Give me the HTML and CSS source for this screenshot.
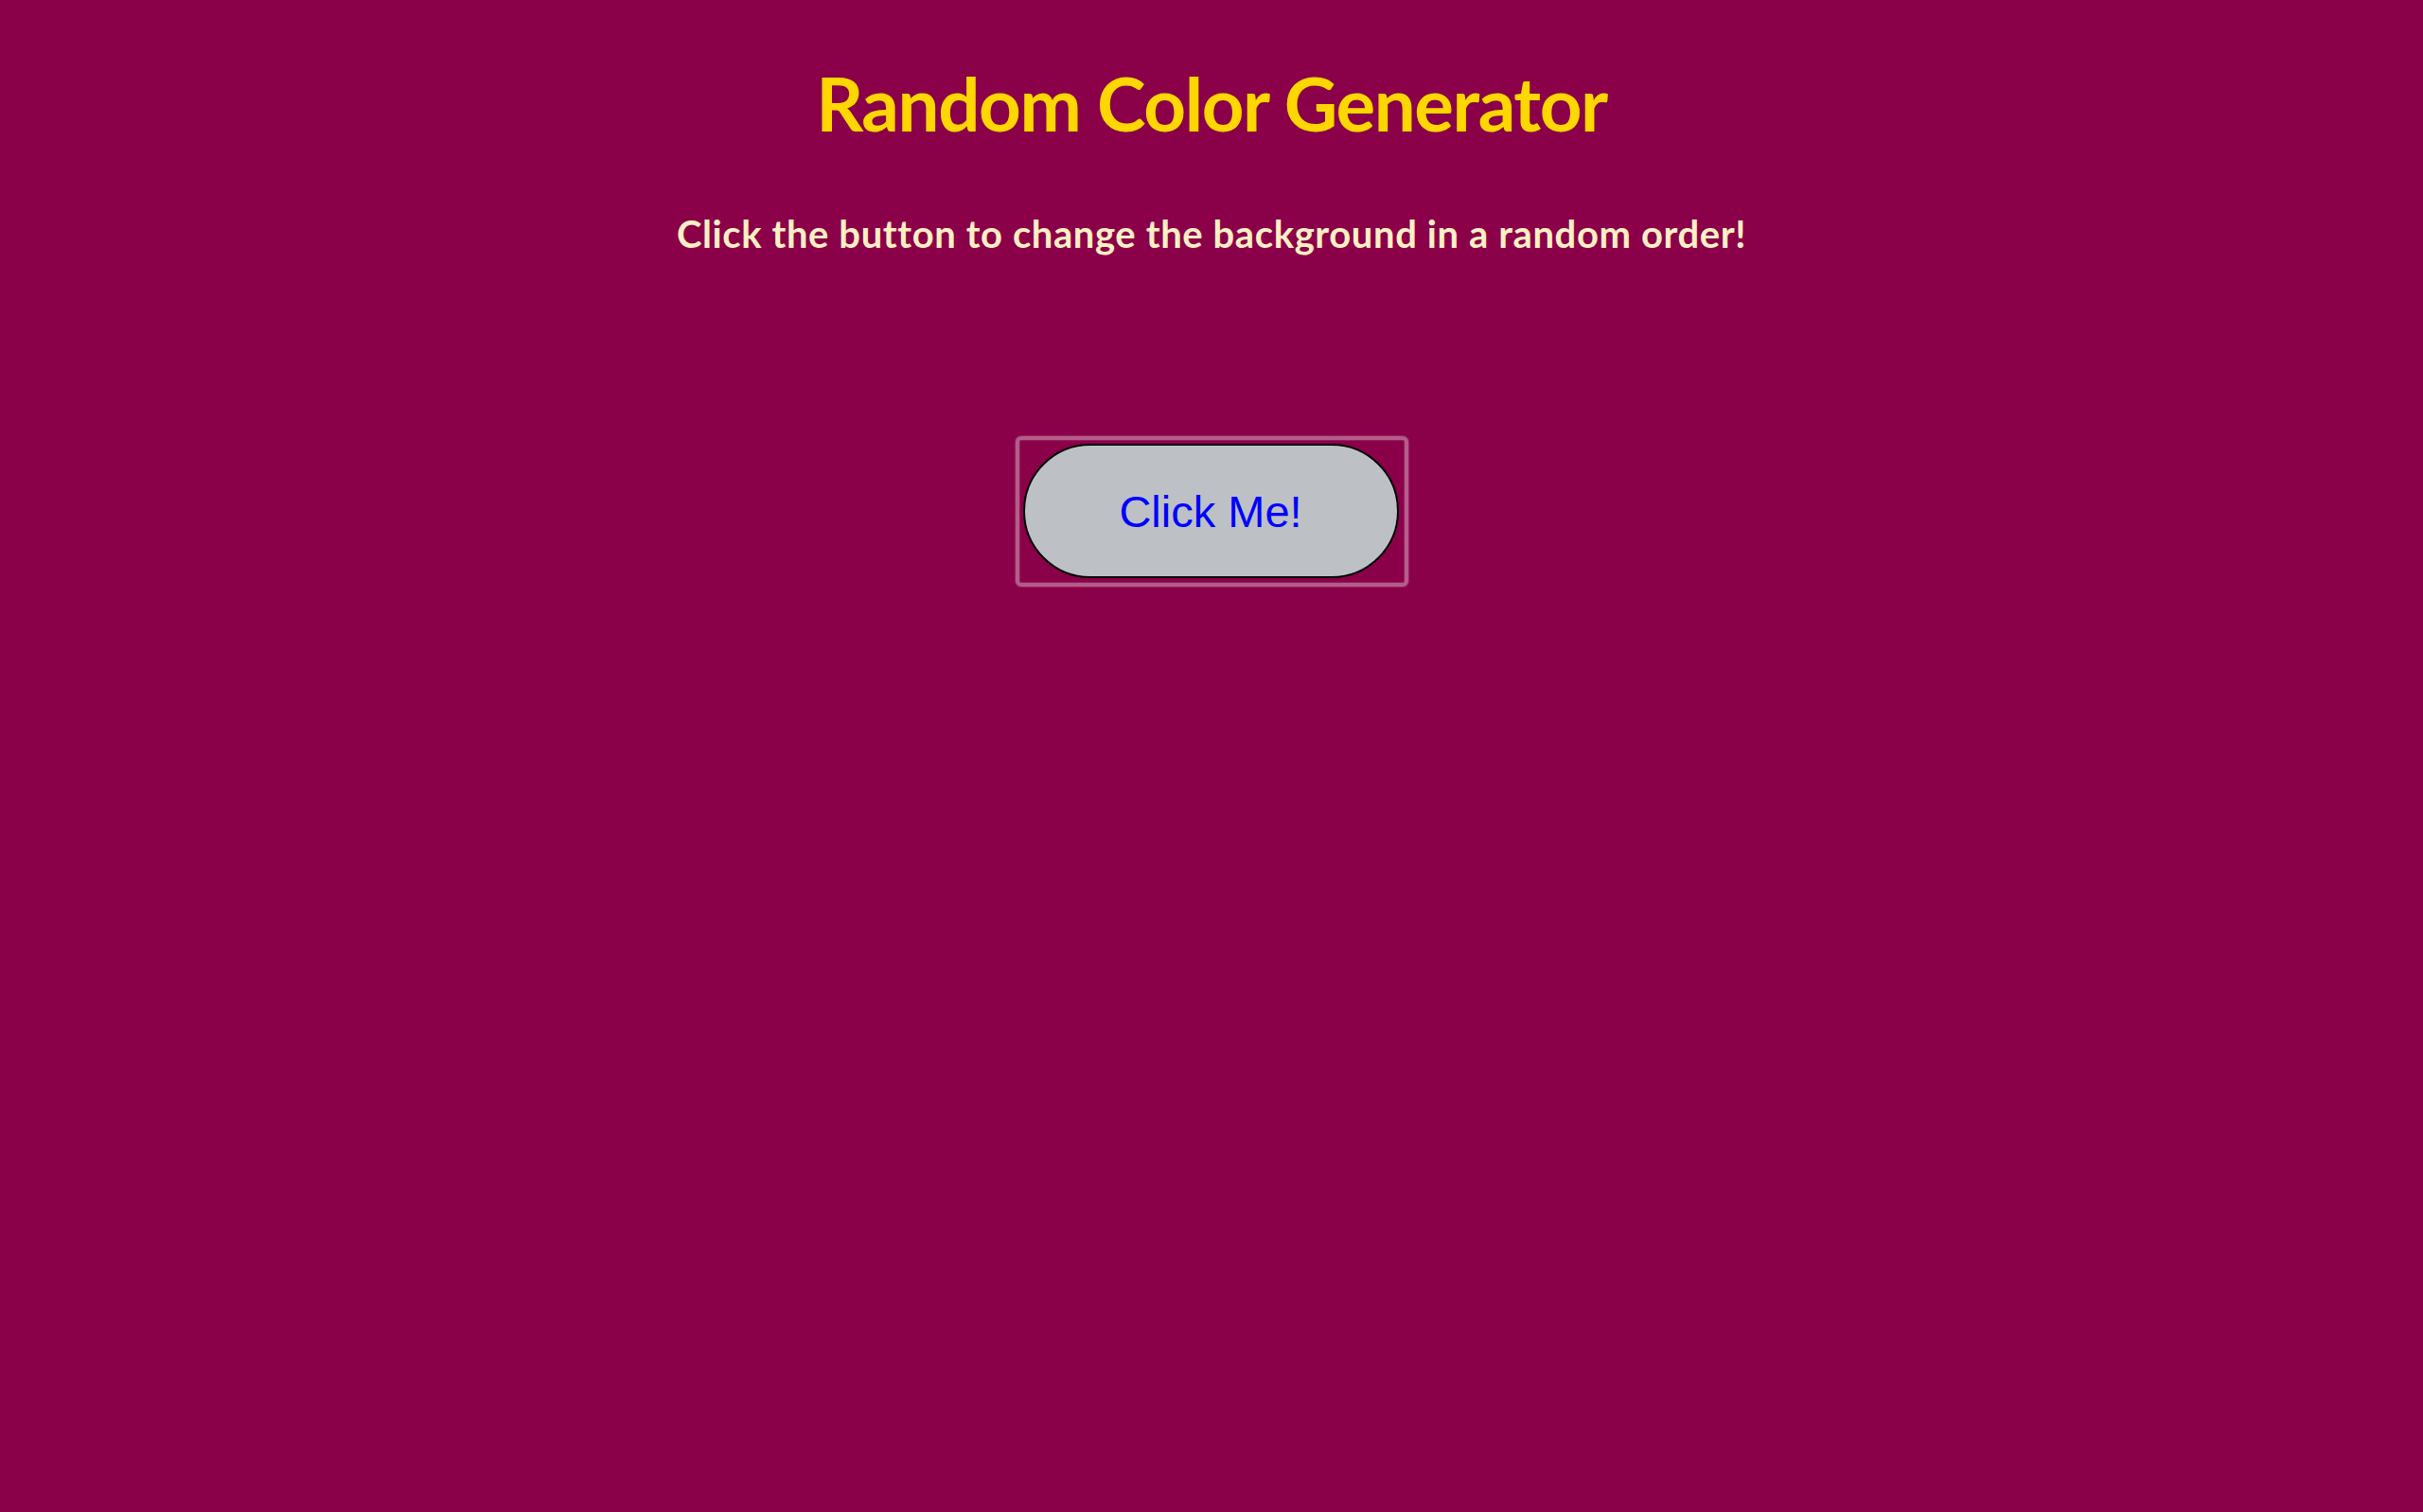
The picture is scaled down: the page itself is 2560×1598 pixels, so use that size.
FILE: index.html
```html
<!DOCTYPE html>
<html lang="en">
<head>
<meta charset="utf-8">
<title>Random Color Generator</title>
<link rel="stylesheet" href="styles.css">
</head>
<body>
<main class="page">
  <h1 class="title">Random Color Generator</h1>
  <p class="subtitle">Click the button to change the background in a random order!</p>
  <div class="focus-ring">
    <button class="btn" type="button">Click Me!</button>
  </div>
</main>
</body>
</html>
```

FILE: styles.css
```css
html, body {
  margin: 0;
  padding: 0;
  background: #8a0049;
  height: 100%;
}
.page {
  display: flex;
  flex-direction: column;
  align-items: center;
  padding-top: 61px;
  font-family: "Lato", "Open Sans", sans-serif;
}
.title {
  margin: 0;
  font-size: 78px;
  line-height: 96px;
  font-weight: 700;
  letter-spacing: -1.4px;
  color: #ffd700;
}
.subtitle {
  margin: 66px 0 0 0;
  font-size: 40px;
  line-height: 48px;
  font-weight: 700;
  letter-spacing: 0.6px;
  color: #ffefc4;
}
.focus-ring {
  margin-top: 190px;
  padding: 4px 6px 5px 4px;
  border: 4px solid rgba(255, 255, 255, 0.36);
  border-radius: 6px;
  box-shadow: 0 0 1px 1px rgba(255, 255, 255, 0.14), inset 0 0 1px 1px rgba(255, 255, 255, 0.12);
}
.btn {
  display: block;
  width: 397px;
  height: 142px;
  border: 2px solid #000;
  border-radius: 71px;
  background: #bdc1c5;
  color: #0000ff;
  font-family: "Liberation Sans", Arial, sans-serif;
  font-size: 47px;
  padding: 0;
  cursor: pointer;
}
```
